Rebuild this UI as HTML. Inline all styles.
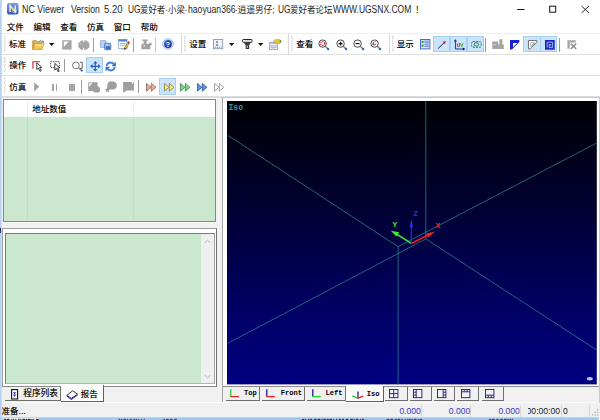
<!DOCTYPE html>
<html lang="zh-CN"><head><meta charset="utf-8"><title>NC Viewer</title><style>
html,body{margin:0;padding:0;background:#fff;}
body{width:600px;height:420px;overflow:hidden;position:relative;font-family:"Liberation Sans","Noto Sans CJK SC",sans-serif;}
.a{position:absolute;display:block;}
.t{position:absolute;white-space:nowrap;line-height:12px;font-size:8.6px;color:#000;font-family:"Liberation Sans","Noto Sans CJK SC",sans-serif;transform-origin:0 50%;}
.tt{font-size:9.6px;line-height:12px;color:#000;}
svg{overflow:visible;}
</style></head><body>
<svg class="a" style="left:7px;top:3.3px" width="11.5" height="11.5" viewBox="0 0 11.5 11.5"><defs><linearGradient id="gi" x1="0" y1="0" x2="0" y2="1"><stop offset="0" stop-color="#7f9fe0"/><stop offset="1" stop-color="#2c50c8"/></linearGradient></defs>
<rect x="0" y="0" width="11.5" height="11.5" rx="2" fill="url(#gi)"/>
<path d="M3 9V2.5L8.3 9V2.5" fill="none" stroke="#f2f0b8" stroke-width="1.5"/>
<circle cx="7.6" cy="7.8" r="2" fill="none" stroke="#d0d8a0" stroke-width="0.7"/></svg>
<div class="t tt" style="left:22.4px;top:4.2px;font-size:10.0px;color:#262626;transform:scaleX(0.8864)">NC Viewer</div>
<div class="t tt" style="left:71.2px;top:4.2px;font-size:10.0px;color:#262626;transform:scaleX(0.8663)">Version</div>
<div class="t tt" style="left:103.7px;top:4.2px;font-size:10.0px;color:#262626;transform:scaleX(0.9451)">5.20</div>
<div class="t tt" style="left:127.6px;top:4.2px;font-size:10.0px;color:#262626;transform:scaleX(0.8333)">UG</div>
<div class="t tt" style="left:140.4px;top:4.2px;font-size:9.2px;color:#262626;transform:scaleX(0.9143)">爱好者·小梁·</div>
<div class="t tt" style="left:187.6px;top:4.2px;font-size:10.0px;color:#262626;transform:scaleX(0.8645)">haoyuan366</div>
<div class="t tt" style="left:235.4px;top:4.2px;font-size:9.2px;color:#262626;transform:scaleX(0.9345)">·逍遥男仔;</div>
<div class="t tt" style="left:277.5px;top:4.2px;font-size:10.0px;color:#262626;transform:scaleX(0.8333)">UG</div>
<div class="t tt" style="left:290.2px;top:4.2px;font-size:9.2px;color:#262626;transform:scaleX(0.9273)">爱好者论坛</div>
<div class="t tt" style="left:332.6px;top:4.2px;font-size:10.0px;color:#262626;transform:scaleX(0.8480)">WWW.UGSNX.COM</div>
<div class="t tt" style="left:414.6px;top:4.2px;font-size:9.2px;color:#262626;transform:scaleX(1.0014)">！</div>
<svg class="a" style="left:510px;top:0px" width="90" height="20" viewBox="0 0 90 20"><path d="M7.2 9.5H14.5" stroke="#111" stroke-width="1"/>
<rect x="39.7" y="6.2" width="6" height="6" fill="none" stroke="#111" stroke-width="1"/>
<path d="M71.5 6L79 13M79 6L71.5 13" stroke="#111" stroke-width="0.9" fill="none"/></svg>
<div class="t" style="left:6.8px;top:21.3px;font-size:8.5px;color:#000;text-shadow:0 0 0.5px rgba(0,0,0,0.5);">文件</div>
<div class="t" style="left:33.6px;top:21.3px;font-size:8.5px;color:#000;text-shadow:0 0 0.5px rgba(0,0,0,0.5);">编辑</div>
<div class="t" style="left:60.2px;top:21.3px;font-size:8.5px;color:#000;text-shadow:0 0 0.5px rgba(0,0,0,0.5);">查看</div>
<div class="t" style="left:87px;top:21.3px;font-size:8.5px;color:#000;text-shadow:0 0 0.5px rgba(0,0,0,0.5);">仿真</div>
<div class="t" style="left:113.8px;top:21.3px;font-size:8.5px;color:#000;text-shadow:0 0 0.5px rgba(0,0,0,0.5);">窗口</div>
<div class="t" style="left:140.8px;top:21.3px;font-size:8.5px;color:#000;text-shadow:0 0 0.5px rgba(0,0,0,0.5);">帮助</div>
<div class="a" style="left:2px;top:33px;width:598px;height:1px;background:#ededed"></div>
<div class="a" style="left:2px;top:54px;width:598px;height:1px;background:#e0e0e0"></div>
<div class="a" style="left:2px;top:75px;width:598px;height:1px;background:#e0e0e0"></div>
<div class="a" style="left:2px;top:96px;width:598px;height:2px;background:#dedede"></div>
<div class="a" style="left:181.0px;top:34px;width:1px;height:20px;background:#d8d8d8"></div>
<div class="a" style="left:287.7px;top:34px;width:1px;height:20px;background:#d8d8d8"></div>
<div class="a" style="left:388.6px;top:34px;width:1px;height:20px;background:#d8d8d8"></div>
<svg class="a" style="left:3.6px;top:35.6px" width="2" height="17.799999999999997" viewBox="0 0 2 17.799999999999997"><rect x="0" y="0.0" width="1.2" height="1.2" fill="#c0c0c0"/><rect x="0.5" y="2.3" width="1.2" height="1.2" fill="#c0c0c0"/><rect x="0" y="4.6" width="1.2" height="1.2" fill="#c0c0c0"/><rect x="0.5" y="6.9" width="1.2" height="1.2" fill="#c0c0c0"/><rect x="0" y="9.2" width="1.2" height="1.2" fill="#c0c0c0"/><rect x="0.5" y="11.5" width="1.2" height="1.2" fill="#c0c0c0"/><rect x="0" y="13.8" width="1.2" height="1.2" fill="#c0c0c0"/></svg>
<svg class="a" style="left:184px;top:35.6px" width="2" height="17.799999999999997" viewBox="0 0 2 17.799999999999997"><rect x="0" y="0.0" width="1.2" height="1.2" fill="#c0c0c0"/><rect x="0.5" y="2.3" width="1.2" height="1.2" fill="#c0c0c0"/><rect x="0" y="4.6" width="1.2" height="1.2" fill="#c0c0c0"/><rect x="0.5" y="6.9" width="1.2" height="1.2" fill="#c0c0c0"/><rect x="0" y="9.2" width="1.2" height="1.2" fill="#c0c0c0"/><rect x="0.5" y="11.5" width="1.2" height="1.2" fill="#c0c0c0"/><rect x="0" y="13.8" width="1.2" height="1.2" fill="#c0c0c0"/></svg>
<svg class="a" style="left:291.2px;top:35.6px" width="2" height="17.799999999999997" viewBox="0 0 2 17.799999999999997"><rect x="0" y="0.0" width="1.2" height="1.2" fill="#c0c0c0"/><rect x="0.5" y="2.3" width="1.2" height="1.2" fill="#c0c0c0"/><rect x="0" y="4.6" width="1.2" height="1.2" fill="#c0c0c0"/><rect x="0.5" y="6.9" width="1.2" height="1.2" fill="#c0c0c0"/><rect x="0" y="9.2" width="1.2" height="1.2" fill="#c0c0c0"/><rect x="0.5" y="11.5" width="1.2" height="1.2" fill="#c0c0c0"/><rect x="0" y="13.8" width="1.2" height="1.2" fill="#c0c0c0"/></svg>
<svg class="a" style="left:392px;top:35.6px" width="2" height="17.799999999999997" viewBox="0 0 2 17.799999999999997"><rect x="0" y="0.0" width="1.2" height="1.2" fill="#c0c0c0"/><rect x="0.5" y="2.3" width="1.2" height="1.2" fill="#c0c0c0"/><rect x="0" y="4.6" width="1.2" height="1.2" fill="#c0c0c0"/><rect x="0.5" y="6.9" width="1.2" height="1.2" fill="#c0c0c0"/><rect x="0" y="9.2" width="1.2" height="1.2" fill="#c0c0c0"/><rect x="0.5" y="11.5" width="1.2" height="1.2" fill="#c0c0c0"/><rect x="0" y="13.8" width="1.2" height="1.2" fill="#c0c0c0"/></svg>
<svg class="a" style="left:3.6px;top:56.8px" width="2" height="17.799999999999997" viewBox="0 0 2 17.799999999999997"><rect x="0" y="0.0" width="1.2" height="1.2" fill="#c0c0c0"/><rect x="0.5" y="2.3" width="1.2" height="1.2" fill="#c0c0c0"/><rect x="0" y="4.6" width="1.2" height="1.2" fill="#c0c0c0"/><rect x="0.5" y="6.9" width="1.2" height="1.2" fill="#c0c0c0"/><rect x="0" y="9.2" width="1.2" height="1.2" fill="#c0c0c0"/><rect x="0.5" y="11.5" width="1.2" height="1.2" fill="#c0c0c0"/><rect x="0" y="13.8" width="1.2" height="1.2" fill="#c0c0c0"/></svg>
<svg class="a" style="left:3.6px;top:77.8px" width="2" height="17.60000000000001" viewBox="0 0 2 17.60000000000001"><rect x="0" y="0.0" width="1.2" height="1.2" fill="#c0c0c0"/><rect x="0.5" y="2.3" width="1.2" height="1.2" fill="#c0c0c0"/><rect x="0" y="4.6" width="1.2" height="1.2" fill="#c0c0c0"/><rect x="0.5" y="6.9" width="1.2" height="1.2" fill="#c0c0c0"/><rect x="0" y="9.2" width="1.2" height="1.2" fill="#c0c0c0"/><rect x="0.5" y="11.5" width="1.2" height="1.2" fill="#c0c0c0"/><rect x="0" y="13.8" width="1.2" height="1.2" fill="#c0c0c0"/></svg>
<div class="t" style="left:9px;top:38px;font-size:8.5px;color:#000;text-shadow:0 0 0.5px rgba(0,0,0,0.5);">标准</div>
<svg class="a" style="left:32px;top:38.6px" width="13" height="11.4" viewBox="0 0 13 11.4"><defs><linearGradient id="gf" x1="0" y1="0" x2="0" y2="1"><stop offset="0" stop-color="#fbe590"/><stop offset="1" stop-color="#e9b93a"/></linearGradient></defs>
<path d="M0.6 10.2V2.2Q0.6 1.4 1.4 1.4H4.2L5.2 2.6H9.2Q9.8 2.6 9.8 3.3V4.5H3L0.6 10.2Z" fill="#d9b04c" stroke="#a8842e" stroke-width="0.6"/>
<path d="M0.8 10.6L3 4.6H12.2L9.8 10.6Z" fill="url(#gf)" stroke="#b08a30" stroke-width="0.6"/>
<path d="M7.5 1.8Q9.5 0.2 11 2.4" fill="none" stroke="#7098d8" stroke-width="0.8"/><path d="M12 1.6L11.6 3.8L9.8 3Z" fill="#3060c0"/></svg>
<svg class="a" style="left:49.3px;top:42.9px" width="5.400000000000006" height="3.1000000000000014" viewBox="0 0 5.400000000000006 3.1000000000000014"><polygon points="0,0 5.400000000000006,0 2.700000000000003,3.1000000000000014" fill="#111"/></svg>
<svg class="a" style="left:61.5px;top:39.5px" width="10" height="10" viewBox="0 0 10 10"><rect x="0.2" y="0.2" width="9.4" height="9.4" fill="#a6a6a6"/><polygon points="1.8,1.6 7,1.6 1.8,6.8" fill="#fff"/></svg>
<svg class="a" style="left:77.5px;top:39.5px" width="12" height="10.5" viewBox="0 0 12 10.5"><path d="M3.2 0.6H8.4L11.4 3.2V7.2L8.4 9.8H3.2L0.4 7.2V3.2Z" fill="#a6a6a6"/><rect x="5.2" y="0.4" width="1" height="1.8" fill="#fff"/><rect x="5.2" y="8" width="1" height="2" fill="#fff"/><rect x="2.2" y="3.4" width="1" height="1" fill="#ddd"/></svg>
<div class="a" style="left:92.8px;top:37.5px;width:1px;height:14.0px;background:#9c9c9c"></div>
<svg class="a" style="left:100px;top:39.5px" width="11.5" height="10.2" viewBox="0 0 11.5 10.2"><rect x="0.4" y="0.4" width="5.6" height="7.2" rx="0.8" fill="#b8d0f0" stroke="#6d8fc8" stroke-width="0.6"/>
<rect x="4.6" y="3.2" width="6.2" height="6.6" rx="0.8" fill="#8fb4e8" stroke="#3c68b8" stroke-width="0.7"/>
<rect x="6" y="6.2" width="4.2" height="3" fill="#3c6cc0"/><rect x="6" y="4.6" width="2.4" height="0.9" fill="#e8f0ff"/></svg>
<svg class="a" style="left:117.8px;top:39px" width="12" height="11" viewBox="0 0 12 11"><rect x="0.6" y="0.5" width="8.4" height="8.8" fill="#fff" stroke="#7a98c8" stroke-width="0.7"/>
<rect x="0.6" y="0.5" width="8.4" height="2" fill="#4a86d8"/>
<rect x="1.8" y="4" width="5.6" height="0.9" fill="#a0a8b8"/><rect x="1.8" y="5.8" width="5.6" height="0.9" fill="#b0a8c8"/>
<rect x="3.6" y="9.3" width="3" height="1.2" fill="#9ab0d0"/>
<path d="M10.4 2.4L11.6 3.6L8 10L6.4 10.4L6.7 8.8Z" fill="#d8d428" stroke="#333" stroke-width="0.4"/>
<path d="M10.4 2.4L11.6 3.6L10.8 5L9.5 3.9Z" fill="#c02828"/><path d="M6.4 10.4L6.7 8.8L8 10Z" fill="#111"/></svg>
<div class="a" style="left:133.0px;top:37.5px;width:1px;height:14.0px;background:#9c9c9c"></div>
<svg class="a" style="left:140.5px;top:39px" width="11.5" height="10.6" viewBox="0 0 11.5 10.6"><path d="M1 0.5H7.2V1.8H5.6L5.4 4.8H9.4V10.2H0.4V4.8H2.8L2.4 1.8H1Z" fill="#a2a2a2"/>
<rect x="2.6" y="6.2" width="1.4" height="1.4" fill="#e8e8e8"/>
<path d="M8.4 3.6L10.8 6.4M10.8 3.6L8.4 6.4" stroke="#8c8c8c" stroke-width="0.9"/></svg>
<div class="a" style="left:154.8px;top:37.5px;width:1.4px;height:14.0px;background:#c4c4c4"></div>
<svg class="a" style="left:162.3px;top:38.3px" width="12" height="12" viewBox="0 0 12 12"><defs><radialGradient id="gh" cx="0.4" cy="0.3" r="0.8"><stop offset="0" stop-color="#3c72e4"/><stop offset="1" stop-color="#0a2a94"/></radialGradient></defs>
<circle cx="6" cy="6" r="5.4" fill="#cfdcf8" stroke="#9cb2e6" stroke-width="0.7"/><circle cx="6" cy="6" r="3.9" fill="url(#gh)"/>
<text x="6" y="8.5" font-family="Liberation Sans,sans-serif" font-weight="bold" font-size="7" fill="#fff" text-anchor="middle">?</text></svg>
<div class="t" style="left:189.2px;top:38px;font-size:8.5px;color:#000;text-shadow:0 0 0.5px rgba(0,0,0,0.5);">设置</div>
<svg class="a" style="left:212.8px;top:39.2px" width="10.4" height="10.4" viewBox="0 0 10.4 10.4"><rect x="0.5" y="0.5" width="9.2" height="9.2" fill="#eaf1f9" stroke="#8a9bb0" stroke-width="0.9"/>
<rect x="3.2" y="2.2" width="1.6" height="1.6" fill="#5a6878"/><rect x="3.2" y="5.2" width="1.6" height="1.6" fill="#5a6878"/>
<rect x="6.2" y="1.4" width="1" height="6" fill="#fff"/>
<path d="M1.8 8.2H8.6" stroke="#6a7888" stroke-width="1" stroke-dasharray="1 1"/></svg>
<svg class="a" style="left:229px;top:42.9px" width="5.300000000000011" height="3.1000000000000014" viewBox="0 0 5.300000000000011 3.1000000000000014"><polygon points="0,0 5.300000000000011,0 2.6500000000000057,3.1000000000000014" fill="#111"/></svg>
<svg class="a" style="left:241.6px;top:39.2px" width="10.8" height="10.6" viewBox="0 0 10.8 10.6"><rect x="0.6" y="0.5" width="9.4" height="2.8" rx="0.6" fill="#fff" stroke="#222" stroke-width="1"/>
<path d="M1.6 3.4H9L7.2 6V10H3.6V6Z" fill="#3a3a3a"/><rect x="4.6" y="6.6" width="1.4" height="2.4" fill="#aaa"/><rect x="3" y="1.4" width="4.6" height="0.8" fill="#bbb"/></svg>
<svg class="a" style="left:257.8px;top:42.9px" width="5.300000000000011" height="3.1000000000000014" viewBox="0 0 5.300000000000011 3.1000000000000014"><polygon points="0,0 5.300000000000011,0 2.6500000000000057,3.1000000000000014" fill="#111"/></svg>
<svg class="a" style="left:269px;top:39px" width="13" height="11" viewBox="0 0 13 11"><rect x="0.5" y="3.2" width="8.2" height="7.2" fill="#f4f8ff" stroke="#7a9ccc" stroke-width="0.8"/>
<rect x="0.5" y="3.2" width="8.2" height="1.8" fill="#9cbbe8"/>
<rect x="2" y="6.6" width="5.4" height="2.4" fill="#c8d4e4" stroke="#8898b0" stroke-width="0.4"/>
<path d="M4.2 2.2L6.2 0.4H10.8L12.4 2.2L10.8 4.6H6.2Z" fill="#e8c040" stroke="#b89020" stroke-width="0.4"/>
<path d="M10.8 0.6L12.6 2.3L10.8 4.4Z" fill="#40a040"/></svg>
<div class="t" style="left:296.2px;top:38.4px;font-size:8.5px;color:#000;text-shadow:0 0 0.5px rgba(0,0,0,0.5);">查看</div>
<svg class="a" style="left:318.4px;top:39px" width="11.5" height="11.5" viewBox="0 0 11.5 11.5"><path d="M6.8 6.8L9.6 9.6" stroke="#8a8a8a" stroke-width="1.4"/>
<ellipse cx="10" cy="9.9" rx="1.4" ry="1.1" fill="#2c62c8" transform="rotate(45 10 9.9)"/>
<circle cx="4.6" cy="4.6" r="3.7" fill="#fff" stroke="#404040" stroke-width="0.95"/><circle cx="4.6" cy="4.6" r="2" fill="none" stroke="#d82828" stroke-width="1.1" stroke-dasharray="1.3 0.7"/></svg>
<svg class="a" style="left:335.59999999999997px;top:39px" width="11.5" height="11.5" viewBox="0 0 11.5 11.5"><path d="M6.8 6.8L9.6 9.6" stroke="#8a8a8a" stroke-width="1.4"/>
<ellipse cx="10" cy="9.9" rx="1.4" ry="1.1" fill="#2c62c8" transform="rotate(45 10 9.9)"/>
<circle cx="4.6" cy="4.6" r="3.7" fill="#fff" stroke="#404040" stroke-width="0.95"/><path d="M2.6 4.6H6.6M4.6 2.8V6.4" stroke="#111" stroke-width="1.2"/></svg>
<svg class="a" style="left:352.7px;top:39px" width="11.5" height="11.5" viewBox="0 0 11.5 11.5"><path d="M6.8 6.8L9.6 9.6" stroke="#8a8a8a" stroke-width="1.4"/>
<ellipse cx="10" cy="9.9" rx="1.4" ry="1.1" fill="#2c62c8" transform="rotate(45 10 9.9)"/>
<circle cx="4.6" cy="4.6" r="3.7" fill="#fff" stroke="#404040" stroke-width="0.95"/><path d="M2.6 4.6H6.6" stroke="#111" stroke-width="1.2"/></svg>
<svg class="a" style="left:369.79999999999995px;top:39px" width="11.5" height="11.5" viewBox="0 0 11.5 11.5"><path d="M6.8 6.8L9.6 9.6" stroke="#8a8a8a" stroke-width="1.4"/>
<ellipse cx="10" cy="9.9" rx="1.4" ry="1.1" fill="#2c62c8" transform="rotate(45 10 9.9)"/>
<circle cx="4.6" cy="4.6" r="3.7" fill="#fff" stroke="#404040" stroke-width="0.95"/><path d="M3.4 6V3" stroke="#2040c0" stroke-width="0.9"/><path d="M3.4 6L2.4 4.6" stroke="#30a030" stroke-width="0.9"/><path d="M3.4 6L6 5.4" stroke="#d02020" stroke-width="0.9"/><path d="M4.4 3L6.2 2.6" stroke="#c03030" stroke-width="0.7"/></svg>
<div class="t" style="left:396.8px;top:38.4px;font-size:8.5px;color:#000;text-shadow:0 0 0.5px rgba(0,0,0,0.5);">显示</div>
<svg class="a" style="left:419.6px;top:39.3px" width="10.6" height="10.6" viewBox="0 0 10.6 10.6"><rect x="0.5" y="0.5" width="9.4" height="9.4" fill="#d4e2f8" stroke="#3a62c0" stroke-width="0.9"/>
<rect x="1.6" y="2" width="2" height="2" fill="#30a040"/><rect x="1.6" y="5.6" width="2" height="2" fill="#30a040"/>
<path d="M4.4 2.2H9M4.4 3.8H9M4.4 5.8H9M4.4 7.4H9" stroke="#4a6ab8" stroke-width="0.7"/></svg>
<div class="a" style="left:433.2px;top:36.2px;width:17.0px;height:15.799999999999997px;background:#cce4f7;box-sizing:border-box;border:1px solid #a5d0f3"></div>
<div class="a" style="left:449.6px;top:36.2px;width:17.599999999999966px;height:15.799999999999997px;background:#cce4f7;box-sizing:border-box;border:1px solid #a5d0f3"></div>
<div class="a" style="left:466.6px;top:36.2px;width:17.0px;height:15.799999999999997px;background:#cce4f7;box-sizing:border-box;border:1px solid #a5d0f3"></div>
<svg class="a" style="left:437px;top:40px" width="10" height="10" viewBox="0 0 10 10"><path d="M1 8.6L7 2.8" stroke="#20207c" stroke-width="1"/><path d="M8.8 1L8 4.2L5.6 1.8Z" fill="#d0203c"/></svg>
<svg class="a" style="left:453px;top:39px" width="13" height="11.4" viewBox="0 0 13 11.4"><path d="M2.4 1.6V10H11" fill="none" stroke="#2030c0" stroke-width="1"/>
<path d="M2.4 0L4 2.6H0.8Z" fill="#2030c0"/><path d="M12.4 10L9.8 8.4V11.4Z" fill="#10107c"/>
<path d="M4.4 4.2V7Q4.4 7.8 5.4 7.8T6.4 7V4.2" fill="none" stroke="#d02030" stroke-width="0.9"/>
<path d="M7.4 4.2L8.7 7.8L10 4.2" fill="none" stroke="#30a030" stroke-width="0.9"/></svg>
<svg class="a" style="left:470.8px;top:41px" width="11" height="7" viewBox="0 0 11 7"><rect x="0.6" y="0.6" width="9.6" height="5.6" rx="1.6" fill="none" stroke="#0e7c6c" stroke-width="1" stroke-dasharray="2 1"/>
<ellipse cx="5.4" cy="3.4" rx="2.2" ry="1.7" fill="none" stroke="#0e7c6c" stroke-width="0.9"/></svg>
<div class="a" style="left:484.9px;top:37.5px;width:1px;height:14.0px;background:#9c9c9c"></div>
<svg class="a" style="left:492.2px;top:39px" width="12" height="10.2" viewBox="0 0 12 10.2"><path d="M0.2 10V2.4H6.2V5.4H7.4V0.2H10.4V5.4H11.8V10Z" fill="#a4a4a4"/><rect x="1.4" y="5" width="2.2" height="1" fill="#d4d4d4"/></svg>
<svg class="a" style="left:510px;top:40px" width="9.6" height="9.6" viewBox="0 0 9.6 9.6"><path d="M0 0H9.4V2L2 9.4H0Z" fill="#1422d2"/><path d="M3 3H7.4L3 7.4Z" fill="#fff"/><path d="M7 3.6L3.6 7" stroke="#223" stroke-width="0.8" stroke-dasharray="0.9 0.9"/></svg>
<div class="a" style="left:523.2px;top:36px;width:17.59999999999991px;height:15.600000000000001px;background:#cce4f7;box-sizing:border-box;border:1px solid #a5d0f3"></div>
<div class="a" style="left:540.2px;top:36px;width:17.199999999999932px;height:15.600000000000001px;background:#cce4f7;box-sizing:border-box;border:1px solid #a5d0f3"></div>
<svg class="a" style="left:527.8px;top:40.2px" width="9.6" height="9.6" viewBox="0 0 9.6 9.6"><path d="M0.5 0.5H8.9V2.2L2.2 8.9H0.5Z" fill="#fafafa" stroke="#6a6a6a" stroke-width="0.9"/><path d="M2.8 2.8H6.6L2.8 6.6Z" fill="#fff" stroke="#8a8a8a" stroke-width="0.6"/><path d="M6.4 3.4L3.4 6.4" stroke="#333" stroke-width="0.7" stroke-dasharray="0.8 0.8"/></svg>
<svg class="a" style="left:544.8px;top:40.2px" width="9.6" height="9.6" viewBox="0 0 9.6 9.6"><rect x="0" y="0" width="9.7" height="9.7" fill="#1a26c0"/><path d="M2.2 7.6V2.2H7.6V7.6H4.2V4.4H5.8V6" fill="none" stroke="#a8bcf4" stroke-width="0.9"/></svg>
<div class="a" style="left:559.3px;top:37.5px;width:1px;height:14.0px;background:#9c9c9c"></div>
<svg class="a" style="left:566.6px;top:40.4px" width="9.6" height="9.4" viewBox="0 0 9.6 9.4"><path d="M0.4 8.8V0.2H8.8V2.6H2.8V8.8Z" fill="#a6a6a6"/><path d="M3.8 3.6L9.2 9M9.2 3.6L3.8 9" stroke="#8e8e8e" stroke-width="1.5"/></svg>
<div class="t" style="left:9.2px;top:59.400000000000006px;font-size:8.5px;color:#000;text-shadow:0 0 0.5px rgba(0,0,0,0.5);">操作</div>
<svg class="a" style="left:32px;top:61px" width="11.4" height="10.6" viewBox="0 0 11.4 10.6"><path d="M0.9 7.8V0.8H8" fill="none" stroke="#d42020" stroke-width="1.1"/>
<path d="M4.8 1.8L9.8 6.4L7.6 6.6L9.2 9.8L8 10.3L6.5 7.1L4.8 8.6Z" fill="#fff" stroke="#111" stroke-width="0.8"/></svg>
<svg class="a" style="left:49.8px;top:61px" width="11.4" height="10.6" viewBox="0 0 11.4 10.6"><rect x="0.6" y="0.7" width="8.8" height="5.8" fill="none" stroke="#333" stroke-width="0.9" stroke-dasharray="1.4 1"/>
<path d="M4.8 2.4L9.8 6.8L7.6 7L9.2 10.2L8 10.6L6.5 7.5L4.8 9Z" fill="#fff" stroke="#111" stroke-width="0.8"/></svg>
<div class="a" style="left:64.0px;top:59px;width:1px;height:12.799999999999997px;background:#9c9c9c"></div>
<svg class="a" style="left:71.6px;top:61px" width="11.4" height="11" viewBox="0 0 11.4 11"><circle cx="3.9" cy="4.4" r="3.4" fill="#fff" stroke="#555" stroke-width="0.8"/>
<path d="M8 1.2H10.2V7.4H8" fill="none" stroke="#333" stroke-width="0.8"/><path d="M6.6 7L9 9.2" stroke="#888" stroke-width="1.2"/><circle cx="9.8" cy="9.6" r="1.1" fill="#2c62c8"/></svg>
<div class="a" style="left:85.6px;top:57.4px;width:17.30000000000001px;height:15.399999999999999px;background:#cce4f7;box-sizing:border-box;border:1px solid #a5d0f3"></div>
<svg class="a" style="left:89.6px;top:61px" width="10.6" height="10.6" viewBox="0 0 10.6 10.6"><path d="M5.3 1.6V9M1.6 5.3H9" stroke="#2a62c4" stroke-width="1.3"/>
<path d="M5.3 0L7.5 2.6H3.1ZM5.3 10.6L7.5 8H3.1ZM0 5.3L2.6 3.1V7.5ZM10.6 5.3L8 3.1V7.5Z" fill="#2a62c4"/></svg>
<svg class="a" style="left:105px;top:61px" width="11.4" height="11" viewBox="0 0 11.4 11"><path d="M1.6 5Q2 1.8 5.6 1.6Q7.6 1.6 8.8 3" fill="none" stroke="#4486d8" stroke-width="2"/>
<path d="M10.8 0.8V5.2H6.4Z" fill="#2f6cc8"/>
<path d="M9.8 6Q9.4 9.2 5.8 9.4Q3.8 9.4 2.6 8" fill="none" stroke="#4486d8" stroke-width="2"/>
<path d="M0.6 10.2V5.8H5Z" fill="#2f6cc8"/></svg>
<div class="t" style="left:9.2px;top:81px;font-size:8.5px;color:#000;text-shadow:0 0 0.5px rgba(0,0,0,0.5);">仿真</div>
<svg class="a" style="left:34.4px;top:82.4px" width="5.6" height="9.6" viewBox="0 0 5.6 9.6"><polygon points="0.2,0.2 5.2,4.8 0.2,9.4" fill="#a2a2a2"/></svg>
<div class="a" style="left:52.3px;top:83.8px;width:1.9px;height:6.8px;background:#a6a6a6"></div>
<div class="a" style="left:55.6px;top:83.8px;width:1.9px;height:6.8px;background:#a6a6a6"></div>
<div class="a" style="left:68.7px;top:83.8px;width:6px;height:6.8px;background:#a6a6a6"></div>
<div class="a" style="left:80.7px;top:79.8px;width:1px;height:13.799999999999997px;background:#9c9c9c"></div>
<svg class="a" style="left:88px;top:81.8px" width="12.4" height="10.8" viewBox="0 0 12.4 10.8"><path d="M0.2 0.2H9.6V4Q12.2 4.6 12.2 7.4Q12 10.6 8.4 10.6Q5.4 10.6 4.8 9H0.2Z" fill="#9e9e9e"/><path d="M1 1H4.4L1 5Z" fill="#efefef"/></svg>
<svg class="a" style="left:105px;top:81px" width="12.2" height="11.6" viewBox="0 0 12.2 11.6"><path d="M3.4 1.2Q5 -0.2 7 0.6Q11.8 0.4 11.9 4.6Q11.6 8.6 7.6 8.6H5.4Q2 8.4 2.2 4.6Q2.2 2.4 3.4 1.2Z" fill="#9e9e9e"/>
<path d="M2.4 5.8L3.4 7.8L5 8L3.9 9.3L4.4 11.4L2.5 10.2L0.6 11.4L1.1 9.3L0 8L1.6 7.8Z" fill="#9e9e9e"/></svg>
<svg class="a" style="left:122.6px;top:81.6px" width="11" height="10.8" viewBox="0 0 11 10.8"><path d="M0.1 0H8.8L10.9 0V8.6H3.8L0.1 10.8Z" fill="#9e9e9e"/><path d="M8.6 0H10.9L9.2 2.2Z" fill="#e8e8e8"/></svg>
<div class="a" style="left:137.8px;top:80px;width:1px;height:13.400000000000006px;background:#9c9c9c"></div>
<div class="a" style="left:159.2px;top:78.2px;width:16.80000000000001px;height:16.39999999999999px;background:#cce4f7;box-sizing:border-box;border:1px solid #a5d0f3"></div>
<svg class="a" style="left:145.9px;top:83px" width="10.6" height="8.6" viewBox="0 0 10.6 8.6"><polygon points="0.5,0.4 4.9,4.3 0.5,8.2" fill="#f6a898" stroke="#86625a" stroke-width="0.8" stroke-linejoin="round"/>
<polygon points="5.3,0.4 9.9,4.3 5.3,8.2" fill="#f6a898" stroke="#86625a" stroke-width="0.8" stroke-linejoin="round"/></svg>
<svg class="a" style="left:163.6px;top:83px" width="10.6" height="8.6" viewBox="0 0 10.6 8.6"><polygon points="0.5,0.4 4.9,4.3 0.5,8.2" fill="#f8f07c" stroke="#84803c" stroke-width="0.8" stroke-linejoin="round"/>
<polygon points="5.3,0.4 9.9,4.3 5.3,8.2" fill="#f8f07c" stroke="#84803c" stroke-width="0.8" stroke-linejoin="round"/></svg>
<svg class="a" style="left:179.6px;top:83px" width="10.6" height="8.6" viewBox="0 0 10.6 8.6"><polygon points="0.5,0.4 4.9,4.3 0.5,8.2" fill="#78dc84" stroke="#3e804c" stroke-width="0.8" stroke-linejoin="round"/>
<polygon points="5.3,0.4 9.9,4.3 5.3,8.2" fill="#78dc84" stroke="#3e804c" stroke-width="0.8" stroke-linejoin="round"/></svg>
<svg class="a" style="left:196.6px;top:83px" width="10.6" height="8.6" viewBox="0 0 10.6 8.6"><polygon points="0.5,0.4 4.9,4.3 0.5,8.2" fill="#5c98ee" stroke="#2c4e98" stroke-width="0.8" stroke-linejoin="round"/>
<polygon points="5.3,0.4 9.9,4.3 5.3,8.2" fill="#5c98ee" stroke="#2c4e98" stroke-width="0.8" stroke-linejoin="round"/></svg>
<svg class="a" style="left:213.8px;top:83px" width="10.6" height="8.6" viewBox="0 0 10.6 8.6"><polygon points="0.5,0.4 4.9,4.3 0.5,8.2" fill="#ffffff" stroke="#8a8a8a" stroke-width="0.8" stroke-linejoin="round"/>
<polygon points="5.3,0.4 9.9,4.3 5.3,8.2" fill="#ffffff" stroke="#8a8a8a" stroke-width="0.8" stroke-linejoin="round"/></svg>
<div class="a" style="left:2px;top:97.5px;width:598px;height:306px;background:#f0f0f0"></div>
<div class="a" style="left:2px;top:97.5px;width:598px;height:2px;background:#fbfbfb"></div>
<div class="a" style="left:2.5px;top:99px;width:213.5px;height:122.7px;background:#cbe8cf;box-sizing:border-box;border:1px solid #868686"></div>
<div class="a" style="left:3.5px;top:100px;width:211.5px;height:17.3px;background:#fff"></div>
<div class="a" style="left:26.9px;top:100px;width:1px;height:120.6px;background:#edf1ed"></div>
<div class="a" style="left:133.1px;top:100px;width:1px;height:120.6px;background:#edf1ed"></div>
<div class="a" style="left:26.9px;top:117.3px;width:1px;height:103.3px;background:#c0dec5"></div>
<div class="a" style="left:133.1px;top:117.3px;width:1px;height:103.3px;background:#c0dec5"></div>
<div class="t" style="left:32.2px;top:102.8px;font-size:8.5px;color:#000;text-shadow:0 0 0.5px rgba(0,0,0,0.5);">地址数值</div>
<div class="a" style="left:2px;top:221.6px;width:215px;height:1px;background:#fcfcfc"></div>
<div class="a" style="left:2px;top:228px;width:215px;height:175px;background:#f0f0f0"></div>
<div class="a" style="left:2px;top:227.8px;width:215px;height:159.5px;background:#fff;box-sizing:border-box;border:1px solid #a0a0a0;border-right-color:#747474;border-bottom-color:#8a8a8a"></div>
<div class="a" style="left:5px;top:232.8px;width:209.6px;height:151.6px;background:#cbe8cf;box-sizing:border-box;border:1px solid #7c7c7c;border-right-color:#a0a0a0;border-bottom-color:#b4b4b4"></div>
<div class="a" style="left:201.4px;top:234px;width:12.2px;height:149.4px;background:#f0f0f0"></div>
<svg class="a" style="left:203.6px;top:239px" width="7" height="5" viewBox="0 0 7 5"><path d="M0.8 3.8L3.5 1.3L6.2 3.8" fill="none" stroke="#b0b0b0" stroke-width="1"/></svg>
<svg class="a" style="left:203.6px;top:373.6px" width="7" height="5" viewBox="0 0 7 5"><path d="M0.8 1.2L3.5 3.7L6.2 1.2" fill="none" stroke="#b0b0b0" stroke-width="1"/></svg>
<div class="a" style="left:5px;top:387.3px;width:55.5px;height:13.4px;background:#f0f0f0;box-sizing:border-box;border-right:1px solid #707070;border-bottom:1px solid #707070"></div>
<svg class="a" style="left:10.6px;top:389px" width="7.4" height="10.6" viewBox="0 0 7.4 10.6"><rect x="0.6" y="0.6" width="6" height="9.4" fill="#fff" stroke="#111" stroke-width="1.1"/>
<path d="M1.8 3.2H5.4L3.6 5.2ZM1.8 5.6H5.4L3.6 7.8Z" fill="#3830c8"/></svg>
<div class="t" style="left:23.2px;top:387.2px;font-size:8.7px;color:#000;text-shadow:0 0 0.5px rgba(0,0,0,0.5);">程序列表</div>
<div class="a" style="left:60.5px;top:385px;width:43.6px;height:16.8px;background:#fdfdfd;box-sizing:border-box;border-right:1px solid #606060;border-bottom:1px solid #606060"></div>
<svg class="a" style="left:65.6px;top:390.4px" width="12.4" height="10.4" viewBox="0 0 12.4 10.4"><path d="M0.8 5.4L6.6 0.8L11.6 4.2L5.4 8.4Z" fill="#fff" stroke="#1a1a2a" stroke-width="0.9"/><path d="M0.6 5.6L5.4 8.8L11.6 4.6L11.6 5.6L5.4 9.9L0.6 6.6Z" fill="#3028a8"/></svg>
<div class="t" style="left:80.8px;top:388px;font-size:8.5px;color:#000;text-shadow:0 0 0.5px rgba(0,0,0,0.5);">报告</div>
<div class="a" style="left:217.4px;top:97.5px;width:4.8px;height:306px;background:#f2f2f2"></div>
<div class="a" style="left:222.2px;top:97.5px;width:1px;height:306px;background:#fdfdfd"></div>
<div class="a" style="left:222px;top:97.3px;width:377.6px;height:306.2px;background:#fff;box-sizing:border-box;border:1px solid #a4a4a4;border-top-color:#c8c8c8;border-right-color:#b8b8b8;border-bottom:none"></div>
<div class="a" style="left:223px;top:386.2px;width:376px;height:1px;background:#8c8c8c"></div>
<div class="a" style="left:223px;top:387.2px;width:376px;height:14.6px;background:#f1f1f1"></div>
<svg class="a" style="left:226.7px;top:101px" width="369.8" height="283.4" viewBox="0 0 369.8 283.4"><defs><linearGradient id="gv" x1="0" y1="0" x2="0" y2="1"><stop offset="0" stop-color="#000004"/><stop offset="0.35" stop-color="#00002e"/><stop offset="0.7" stop-color="#000060"/><stop offset="1" stop-color="#000082"/></linearGradient></defs>
<rect x="0" y="0" width="369.8" height="283.4" fill="url(#gv)"/>
<g transform="translate(-0.4 0)">
<g stroke="#2a8a8c" stroke-width="0.75" fill="none">
<path d="M199.2 0V137.9"/>
<path d="M171.5 145.7V283.4"/>
<path d="M1.9 34.7L171.5 145.7"/>
<path d="M199.2 137.9L370 249"/>
<path d="M1.2 242.3L199.2 137.9"/>
<path d="M171.5 145.7L369.9 42.1"/>
</g>
<path d="M184.7 142.4L203 133.2" stroke="#e82020" stroke-width="1.7"/><path d="M208.6 130.6L201.6 136.6L199.6 132.4Z" fill="#f02424"/>
<path d="M184.7 142.4L169 132.6" stroke="#30e830" stroke-width="1.7"/><path d="M164.2 129.8L172.6 131.2L169.8 135.6Z" fill="#34f034"/>
<path d="M184.7 142.4V124" stroke="#1c30dc" stroke-width="1.2"/><path d="M184.7 117.4L186.3 126.4H183.1Z" fill="#2034e8"/>
<text x="209" y="127.3" font-family="Liberation Mono,monospace" font-weight="bold" font-size="8" fill="#e82424">X</text>
<text x="166" y="126.1" font-family="Liberation Mono,monospace" font-weight="bold" font-size="8" fill="#34e834">Y</text>
<text x="186.6" y="115" font-family="Liberation Mono,monospace" font-weight="bold" font-size="8" fill="#2034e0">Z</text>
<text x="1.8" y="9" font-family="Liberation Mono,monospace" font-weight="bold" font-size="8.2" fill="#2c9c9c">Iso</text>
<ellipse cx="363.2" cy="277.8" rx="3" ry="1.7" fill="#b4c8f0"/></g></svg>
<div class="a" style="left:225.6px;top:387.2px;width:34.79999999999998px;height:13.4px;background:#f0f0f0;box-sizing:border-box;border-right:1px solid #707070;border-bottom:1px solid #707070"></div>
<svg class="a" style="left:229.6px;top:389.4px" width="9.4" height="8.6" viewBox="0 0 9.4 8.6"><path d="M0.8 0.2V7.6" stroke="#20dc20" stroke-width="1.3"/><path d="M0.4 7.6H8.8" stroke="#ee2020" stroke-width="1.3"/></svg>
<div class="t" style="left:244px;top:387px;font-size:7.1px;color:#000;font-family:'Liberation Mono',monospace;font-weight:bold;">Top</div>
<div class="a" style="left:262.4px;top:387.2px;width:43.0px;height:13.4px;background:#f0f0f0;box-sizing:border-box;border-right:1px solid #707070;border-bottom:1px solid #707070"></div>
<svg class="a" style="left:266px;top:389.4px" width="9.4" height="8.6" viewBox="0 0 9.4 8.6"><path d="M0.8 0.2V7.6" stroke="#18189c" stroke-width="1.3"/><path d="M0.4 7.6H8.8" stroke="#ee2020" stroke-width="1.3"/></svg>
<div class="t" style="left:280.8px;top:387px;font-size:7.1px;color:#000;font-family:'Liberation Mono',monospace;font-weight:bold;">Front</div>
<div class="a" style="left:307.4px;top:387.2px;width:38.80000000000001px;height:13.4px;background:#f0f0f0;box-sizing:border-box;border-right:1px solid #707070;border-bottom:1px solid #707070"></div>
<svg class="a" style="left:312.2px;top:389.4px" width="9.4" height="8.6" viewBox="0 0 9.4 8.6"><path d="M0.8 0.2V7.6" stroke="#18189c" stroke-width="1.3"/><path d="M0.4 7.6H8.8" stroke="#20dc20" stroke-width="1.3"/></svg>
<div class="t" style="left:325.4px;top:387px;font-size:7.1px;color:#000;font-family:'Liberation Mono',monospace;font-weight:bold;">Left</div>
<div class="a" style="left:346.2px;top:385.6px;width:38.0px;height:16.2px;background:#fcfcfc;box-sizing:border-box;border-right:1px solid #606060;border-bottom:1px solid #606060"></div>
<svg class="a" style="left:351.6px;top:391px" width="11.4" height="8" viewBox="0 0 11.4 8"><path d="M6 0.4V7.4" stroke="#18189c" stroke-width="1.3"/><path d="M6 7.4L0.4 4.8" stroke="#20cc20" stroke-width="1.3"/><path d="M6 7.4L11 4.8" stroke="#ee2020" stroke-width="1.3"/></svg>
<div class="t" style="left:366.8px;top:388.4px;font-size:7.1px;color:#000;font-family:'Liberation Mono',monospace;font-weight:bold;">Iso</div>
<div class="a" style="left:384.8px;top:387.2px;width:23.0px;height:13.4px;background:#f0f0f0;box-sizing:border-box;border-right:1px solid #707070;border-bottom:1px solid #707070"></div>
<div class="a" style="left:409.6px;top:387.2px;width:22.19999999999999px;height:13.4px;background:#f0f0f0;box-sizing:border-box;border-right:1px solid #707070;border-bottom:1px solid #707070"></div>
<div class="a" style="left:433.6px;top:387.2px;width:21.799999999999955px;height:13.4px;background:#f0f0f0;box-sizing:border-box;border-right:1px solid #707070;border-bottom:1px solid #707070"></div>
<div class="a" style="left:457.2px;top:387.2px;width:22.0px;height:13.4px;background:#f0f0f0;box-sizing:border-box;border-right:1px solid #707070;border-bottom:1px solid #707070"></div>
<div class="a" style="left:481.6px;top:387.2px;width:22.19999999999999px;height:13.4px;background:#f0f0f0;box-sizing:border-box;border-right:1px solid #707070;border-bottom:1px solid #707070"></div>
<svg class="a" style="left:389.2px;top:389.4px" width="9.6" height="9.4" viewBox="0 0 9.6 9.4"><g fill="none" stroke="#1c1c78" stroke-width="0.9"><rect x="0.5" y="0.5" width="8.4" height="8.2"/><path d="M4.7 0.5V8.7M0.5 4.6H8.9"/></g></svg>
<svg class="a" style="left:413.2px;top:389.4px" width="9.6" height="9.4" viewBox="0 0 9.6 9.4"><g fill="none" stroke="#1c1c78" stroke-width="0.9"><rect x="0.5" y="0.5" width="8.4" height="8.2"/><path d="M3.2 0.5V8.7M0.5 3.2H3.2M0.5 6H3.2"/></g></svg>
<svg class="a" style="left:437.2px;top:389.4px" width="9.6" height="9.4" viewBox="0 0 9.6 9.4"><g fill="none" stroke="#1c1c78" stroke-width="0.9"><rect x="0.5" y="0.5" width="8.4" height="8.2"/><path d="M6.2 0.5V8.7M6.2 3.2H8.9M6.2 6H8.9"/></g></svg>
<svg class="a" style="left:461.2px;top:389.4px" width="9.6" height="9.4" viewBox="0 0 9.6 9.4"><g fill="none" stroke="#1c1c78" stroke-width="0.9"><rect x="0.5" y="0.5" width="8.4" height="8.2"/><path d="M0.5 2.8H8.9M3.2 0.5V2.8M6.2 0.5V2.8"/></g></svg>
<svg class="a" style="left:485.2px;top:389.4px" width="9.6" height="9.4" viewBox="0 0 9.6 9.4"><g fill="none" stroke="#1c1c78" stroke-width="0.9"><rect x="0.5" y="0.5" width="8.4" height="8.2"/><path d="M0.5 6.2H8.9M3.2 6.2V8.7M6.2 6.2V8.7"/></g></svg>
<div class="a" style="left:0px;top:403.4px;width:600px;height:14.2px;background:#f0f0f0"></div>
<div class="a" style="left:2px;top:401.9px;width:597px;height:1.5px;background:#fbfbfb"></div>
<div class="t" style="left:1.6px;top:405px;font-size:8.5px;color:#000;text-shadow:0 0 0.5px rgba(0,0,0,0.5);">准备...</div>
<div class="a" style="left:421.1px;top:404.6px;width:1px;height:12.0px;background:#d8d8d8"></div>
<div class="a" style="left:470.1px;top:404.6px;width:1px;height:12.0px;background:#d8d8d8"></div>
<div class="a" style="left:520.3px;top:404.6px;width:1px;height:12.0px;background:#d8d8d8"></div>
<div class="a" style="left:560.5px;top:404.6px;width:1px;height:12.0px;background:#d8d8d8"></div>
<div class="a" style="left:588.5px;top:404.6px;width:1px;height:12.0px;background:#d8d8d8"></div>
<div class="t" style="left:399.4px;top:405.2px;font-size:8.6px;color:#3a34c4;">0.000</div>
<div class="t" style="left:448.8px;top:405.2px;font-size:8.6px;color:#3a34c4;">0.000</div>
<div class="t" style="left:498.4px;top:405.2px;font-size:8.6px;color:#3a34c4;">0.000</div>
<div class="a" style="left:528.2px;top:404px;width:33px;height:13px;overflow:hidden"><div class="t" style="left:-1.6px;top:1.2px;font-size:8.6px;color:#222">00:00:00</div></div>
<div class="t" style="left:563px;top:405.2px;font-size:8.6px;color:#222;">0</div>
<svg class="a" style="left:590px;top:408px" width="10" height="10" viewBox="0 0 10 10"><g fill="#b8b8b8"><rect x="7" y="1" width="1.4" height="1.4"/><rect x="4.5" y="3.6" width="1.4" height="1.4"/><rect x="7" y="3.6" width="1.4" height="1.4"/><rect x="2" y="6.2" width="1.4" height="1.4"/><rect x="4.5" y="6.2" width="1.4" height="1.4"/><rect x="7" y="6.2" width="1.4" height="1.4"/></g></svg>
<svg class="a" style="left:0px;top:416.8px" width="600" height="3.2" viewBox="0 0 600 3.2"><rect x="0" y="0" width="600" height="1" fill="#b4d6f4"/><rect x="0" y="1" width="600" height="2.4" fill="#9cc9f2"/><rect x="2" y="1" width="36" height="2.4" fill="#eef4fb"/><rect x="3.0" y="1.9" width="2" height="1.4" fill="#15151f"/><rect x="5.8" y="1.9" width="2.6" height="1.4" fill="#15151f"/><rect x="10.2" y="1.9" width="1" height="1.4" fill="#15151f"/><rect x="12.0" y="1.9" width="1" height="1.4" fill="#15151f"/><rect x="14.2" y="1.9" width="1" height="1.4" fill="#15151f"/><rect x="17.0" y="1.9" width="1.4" height="1.4" fill="#15151f"/><rect x="19.2" y="1.9" width="1" height="1.4" fill="#15151f"/><rect x="21.4" y="1.9" width="2.6" height="1.4" fill="#15151f"/><rect x="24.8" y="1.9" width="1.4" height="1.4" fill="#15151f"/><rect x="27.0" y="1.9" width="2.6" height="1.4" fill="#15151f"/><rect x="30.4" y="1.9" width="1" height="1.4" fill="#15151f"/><rect x="32.2" y="1.9" width="1" height="1.4" fill="#15151f"/><rect x="35.0" y="1.9" width="2.6" height="1.4" fill="#15151f"/><rect x="118.0" y="1.9" width="1.4" height="1.4" fill="#2a3a6a"/><rect x="120.2" y="1.9" width="1.4" height="1.4" fill="#2a3a6a"/><rect x="122.8" y="1.9" width="2.6" height="1.4" fill="#2a3a6a"/><rect x="126.2" y="1.9" width="1" height="1.4" fill="#2a3a6a"/><rect x="129.0" y="1.9" width="2" height="1.4" fill="#2a3a6a"/><rect x="132.8" y="1.9" width="1.4" height="1.4" fill="#2a3a6a"/><rect x="135.0" y="1.9" width="1.4" height="1.4" fill="#2a3a6a"/><rect x="137.6" y="1.9" width="1" height="1.4" fill="#2a3a6a"/><rect x="140.4" y="1.9" width="1" height="1.4" fill="#2a3a6a"/><rect x="143.2" y="1.9" width="1" height="1.4" fill="#2a3a6a"/><rect x="163.0" y="1.9" width="1.4" height="1.4" fill="#2a3a6a"/><rect x="165.6" y="1.9" width="2.6" height="1.4" fill="#2a3a6a"/><rect x="169.4" y="1.9" width="2.6" height="1.4" fill="#2a3a6a"/><rect x="173.8" y="1.9" width="2.6" height="1.4" fill="#2a3a6a"/><rect x="302.0" y="1.9" width="2" height="1.4" fill="#1c2c5c"/><rect x="304.8" y="1.9" width="1.4" height="1.4" fill="#1c2c5c"/><rect x="308.0" y="1.9" width="1.4" height="1.4" fill="#1c2c5c"/><rect x="310.2" y="1.9" width="2" height="1.4" fill="#1c2c5c"/><rect x="314.0" y="1.9" width="2.6" height="1.4" fill="#1c2c5c"/><rect x="317.8" y="1.9" width="2.6" height="1.4" fill="#1c2c5c"/><rect x="321.6" y="1.9" width="1" height="1.4" fill="#1c2c5c"/><rect x="323.4" y="1.9" width="2.6" height="1.4" fill="#1c2c5c"/><rect x="326.8" y="1.9" width="2" height="1.4" fill="#1c2c5c"/><rect x="329.6" y="1.9" width="2.6" height="1.4" fill="#1c2c5c"/><rect x="333.4" y="1.9" width="1" height="1.4" fill="#1c2c5c"/><rect x="336.2" y="1.9" width="1" height="1.4" fill="#1c2c5c"/><rect x="339.0" y="1.9" width="2" height="1.4" fill="#1c2c5c"/><rect x="342.2" y="1.9" width="2" height="1.4" fill="#1c2c5c"/><rect x="346.0" y="1.9" width="2.6" height="1.4" fill="#1c2c5c"/><rect x="350.4" y="1.9" width="2.6" height="1.4" fill="#1c2c5c"/><rect x="353.8" y="1.9" width="1" height="1.4" fill="#1c2c5c"/><rect x="356.0" y="1.9" width="2.6" height="1.4" fill="#1c2c5c"/><rect x="360.4" y="1.9" width="1" height="1.4" fill="#1c2c5c"/><rect x="362.2" y="1.9" width="2" height="1.4" fill="#1c2c5c"/><rect x="387.0" y="1.9" width="2.6" height="1.4" fill="#2a3a6a"/><rect x="390.8" y="1.9" width="2.6" height="1.4" fill="#2a3a6a"/><rect x="395.2" y="1.9" width="2" height="1.4" fill="#2a3a6a"/><rect x="398.0" y="1.9" width="2.6" height="1.4" fill="#2a3a6a"/><rect x="401.8" y="1.9" width="1.4" height="1.4" fill="#2a3a6a"/><rect x="405.0" y="1.9" width="1" height="1.4" fill="#2a3a6a"/><rect x="407.2" y="1.9" width="1" height="1.4" fill="#2a3a6a"/><rect x="409.0" y="1.9" width="2" height="1.4" fill="#2a3a6a"/><rect x="411.8" y="1.9" width="1.4" height="1.4" fill="#2a3a6a"/><rect x="414.4" y="1.9" width="2.6" height="1.4" fill="#2a3a6a"/><rect x="418.2" y="1.9" width="1" height="1.4" fill="#2a3a6a"/><rect x="420.0" y="1.9" width="2.6" height="1.4" fill="#2a3a6a"/><rect x="490.0" y="1.9" width="2" height="1.4" fill="#2a3a6a"/><rect x="492.8" y="1.9" width="2.6" height="1.4" fill="#2a3a6a"/><rect x="497.2" y="1.9" width="2" height="1.4" fill="#2a3a6a"/><rect x="501.0" y="1.9" width="2.6" height="1.4" fill="#2a3a6a"/><rect x="504.8" y="1.9" width="2.6" height="1.4" fill="#2a3a6a"/><rect x="508.2" y="1.9" width="1.4" height="1.4" fill="#2a3a6a"/><rect x="510.4" y="1.9" width="1.4" height="1.4" fill="#2a3a6a"/><rect x="512.6" y="1.9" width="1.4" height="1.4" fill="#2a3a6a"/></svg>
<div class="a" style="left:0px;top:0px;width:1.4px;height:420px;background:#b6d4f2"></div>
<div class="a" style="left:1.4px;top:0px;width:0.8px;height:420px;background:#d0dcea"></div>
<div class="a" style="left:599px;top:97px;width:1px;height:306px;background:#c8c8c8"></div>
<div class="a" style="left:0px;top:228.4px;width:1.3px;height:4.4px;background:#1c2c5c"></div>
</body></html>
